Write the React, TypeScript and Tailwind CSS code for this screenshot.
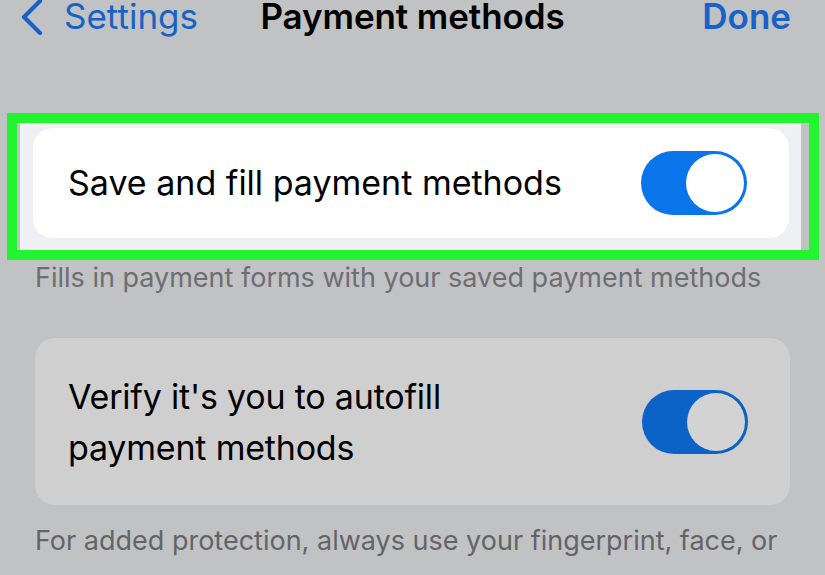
import React from "react";

function Toggle({ track, knob }: { track: string; knob: string }) {
  return (
    <div className={`flex h-[64px] w-[106px] shrink-0 items-center justify-end rounded-full p-[3px] ${track}`}>
      <div className={`h-[58px] w-[58px] rounded-full ${knob}`} />
    </div>
  );
}

export default function App() {
  return (
    <div
      className="h-[575px] w-[825px] overflow-hidden bg-[#c1c2c4]"
      style={{ fontFamily: "Inter, 'Noto Sans', sans-serif" }}
    >
      {/* Nav bar */}
      <div className="grid h-[36px] grid-cols-[1fr_auto_1fr] items-start px-[20px]">
        <div className="flex items-start gap-[20px] text-[#1762c7]">
          <svg width="24" height="36" viewBox="0 0 24 36" className="-mt-[1px] shrink-0">
            <path d="M20 2 L4 18 L20 34" fill="none" stroke="#1762c7" strokeWidth="4.2" strokeLinecap="round" strokeLinejoin="round" />
          </svg>
          <span className="text-[35px] leading-[32px]">Settings</span>
        </div>
        <div className="text-[35px] font-semibold leading-[32px] tracking-[-0.1px] text-black">Payment methods</div>
        <div className="mr-[14px] text-right text-[35px] font-semibold leading-[32px] text-[#1762c7]">Done</div>
      </div>

      {/* Highlighted card */}
      <div className="ml-[7px] mr-[6px] mt-[77px] h-[147px] border-[10px] border-[#22f52f] bg-[#c1c2c4] pl-[3px] pr-[8px]">
        <div className="h-full bg-[#eff0f3] pl-[13px] pr-[12px] pt-[5px] pb-[12px]">
          <div className="flex h-full items-center justify-between rounded-[20px] bg-white pl-[35px] pr-[42px]">
            <span className="text-[34px] leading-none text-black">Save and fill payment methods</span>
            <Toggle track="bg-[#0a74ea]" knob="bg-white" />
          </div>
        </div>
      </div>

      <div className="px-[35px] pt-[1px] text-[27px] leading-[34px] text-[#6e6e71]">
        Fills in payment forms with your saved payment methods
      </div>

      {/* Second card */}
      <div className="mx-[35px] mt-[43px] flex h-[167px] items-center justify-between rounded-[20px] bg-[#cfcfcf] pl-[33px] pr-[42px]">
        <div className="text-[34px] leading-[51px] tracking-[-0.2px] text-black">
          Verify it's you to autofill
          <br />
          payment methods
        </div>
        <Toggle track="bg-[#0b63c8]" knob="bg-[#d3d3d3]" />
      </div>

      <div className="px-[35px] pt-[19px] text-[27px] leading-[34px] text-[#646467]">
        For added protection, always use your fingerprint, face, or
      </div>
    </div>
  );
}
